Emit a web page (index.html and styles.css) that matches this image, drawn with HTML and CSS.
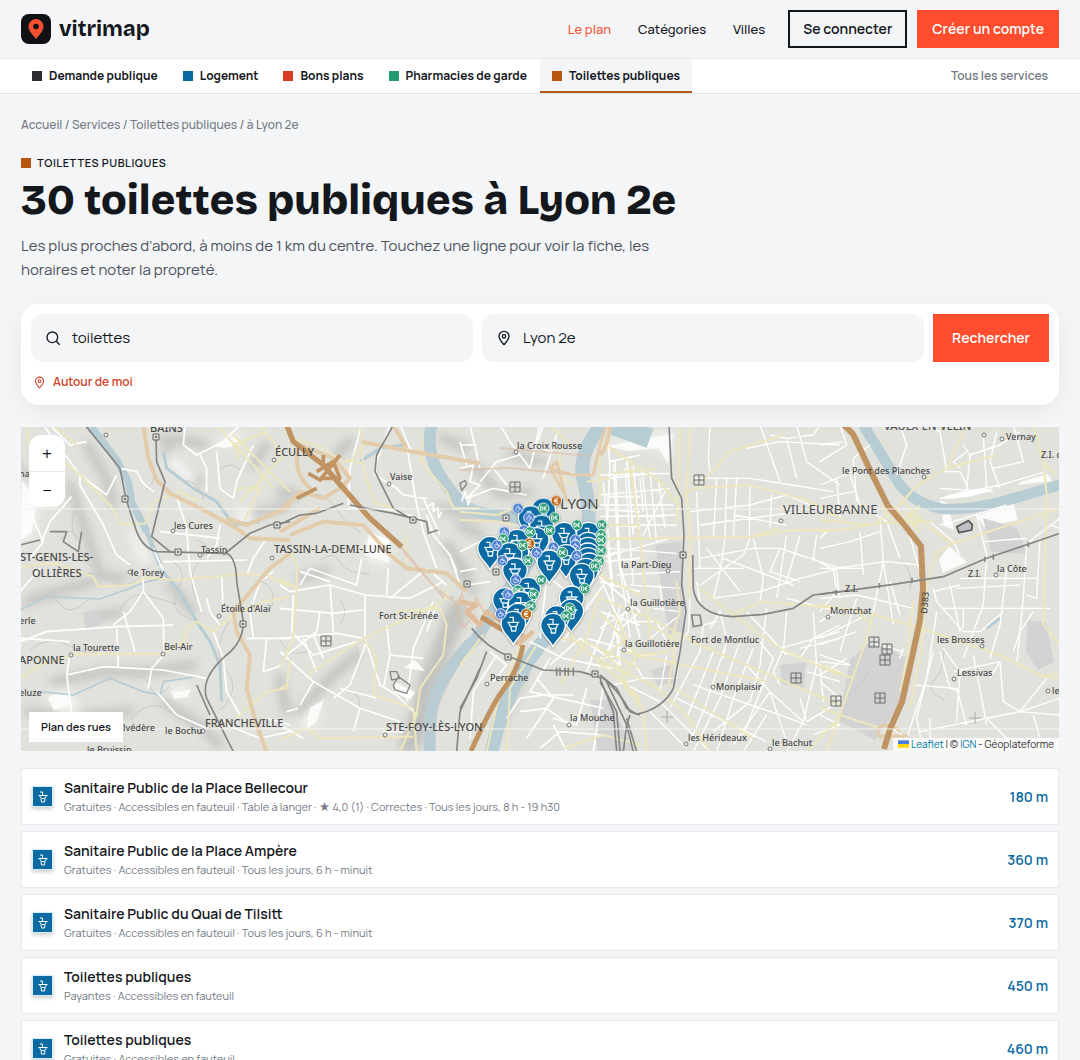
FILE: index.html
```html
<!DOCTYPE html>
<html lang="fr">
<head>
<meta charset="utf-8">
<meta name="viewport" content="width=device-width, initial-scale=1">
<title>30 toilettes publiques à Lyon 2e - vitrimap</title>
<link rel="stylesheet" href="styles.css">
</head>
<body>
<svg class="defs" aria-hidden="true">
  <defs>
    <symbol id="i-basin" viewBox="0 0 24 24"><path d="M6 2h5v7M3 9h18M6 9c0 4 2 6 4 6h4c3 0 4-2 4-6M8 15l1 7h6l1-7" fill="none" stroke="currentColor" stroke-width="2"/></symbol>
    <symbol id="i-pin" viewBox="0 0 24 24"><path d="M12 22c-4-4.500-7.500-8-7.500-12.500a7.500 7.500 0 0 1 15 0C19.500 14 16 17.500 12 22z" fill="none" stroke="currentColor" stroke-width="2" stroke-linejoin="round"/><circle cx="12" cy="9.500" r="2.500" fill="none" stroke="currentColor" stroke-width="2"/></symbol>
  </defs>
</svg>
<header class="topbar">
  <a class="brand" href="#">
    <svg class="brand-mark" viewBox="0 0 30 30" aria-hidden="true"><rect width="30" height="30" rx="8" fill="#0f1115"/><path d="M15 25c-4-5-7.500-8.500-7.500-12.500a7.500 7.500 0 0 1 15 0C22.500 16.500 19 20 15 25z" fill="#f4502f"/><circle cx="15" cy="12.500" r="2.800" fill="#0f1115"/></svg>
    <span>vitrimap</span>
  </a>
  <nav class="main-nav" aria-label="Navigation principale">
    <a class="current" href="#">Le plan</a>
    <a href="#">Catégories</a>
    <a href="#">Villes</a>
  </nav>
  <div class="account">
    <button class="btn btn-outline" type="button">Se connecter</button>
    <button class="btn btn-primary" type="button">Créer un compte</button>
  </div>
</header>
<nav class="services" aria-label="Services">
  <a href="#"><i class="sq ink"></i>Demande publique</a>
  <a href="#"><i class="sq blue"></i>Logement</a>
  <a href="#"><i class="sq red"></i>Bons plans</a>
  <a href="#"><i class="sq green"></i>Pharmacies de garde</a>
  <a class="active" href="#"><i class="sq brown"></i>Toilettes publiques</a>
  <a class="all" href="#">Tous les services</a>
</nav>
<main>
  <nav class="crumbs" aria-label="Fil d'Ariane"><a href="#">Accueil</a> / <a href="#">Services</a> / <a href="#">Toilettes publiques</a> / à Lyon 2e</nav>
  <p class="eyebrow"><i class="sq brown"></i>TOILETTES PUBLIQUES</p>
  <h1>30 toilettes publiques à Lyon 2e</h1>
  <p class="lead">Les plus proches d'abord, à moins de 1 km du centre. Touchez une ligne pour voir la fiche, les horaires et noter la propreté.</p>

  <form class="search">
    <div class="fields">
      <label class="field">
        <svg viewBox="0 0 24 24" aria-hidden="true"><circle cx="11" cy="11" r="8" fill="none" stroke="currentColor" stroke-width="2"/><path d="M17 17l5 5" stroke="currentColor" stroke-width="2"/></svg>
        <input type="text" value="toilettes" aria-label="Que cherchez-vous ?">
      </label>
      <label class="field">
        <svg viewBox="0 0 24 24" aria-hidden="true"><use href="#i-pin"/></svg>
        <input type="text" value="Lyon 2e" aria-label="Lieu">
      </label>
      <button class="btn btn-primary go" type="submit">Rechercher</button>
    </div>
    <button class="around" type="button"><svg viewBox="0 0 24 24" aria-hidden="true"><use href="#i-pin"/></svg>Autour de moi</button>
  </form>

  <section class="map" aria-label="Carte">
    <svg class="map-canvas" viewBox="21 427 1038 324" preserveAspectRatio="xMidYMid slice">
      <defs>
        <filter id="soft" x="-20%" y="-20%" width="140%" height="140%"><feGaussianBlur stdDeviation="5"/></filter>
        <g id="toilet"><path d="M0 62C-12 38-37 24-37-1a37 37 0 0 1 74 0C37 24 12 38 0 62z" fill="#0b6aa2" stroke="#fff" stroke-width="4"/><path d="M-12-20h12v15M-18-5h36M-13-5c0 9 4 13 10 13h6c7 0 10-4 10-13M-7 8l2 13h12l2-13" fill="none" stroke="#e9f4fb" stroke-width="4"/></g>
        <g id="access"><circle cx="-38" cy="-30" r="16" fill="#4f80cf" stroke="#e8f0fb" stroke-width="3"/><circle cx="-39" cy="-28" r="6" fill="none" stroke="#c9dbf7" stroke-width="3"/><path d="M-38-40v9h7l4 8" fill="none" stroke="#c9dbf7" stroke-width="3"/></g>
        <g id="free"><circle cx="39" cy="-30" r="16" fill="#35a078" stroke="#e6f6ef" stroke-width="3"/><path d="M30-36v12h2q5 0 5-6t-5-6zM48-36q-7-1-7 6t7 6M38-30h8" fill="none" stroke="#fff" stroke-width="3"/></g>
        <g id="paid"><circle cx="39" cy="-30" r="16" fill="#c06a18" stroke="#fdf0e2" stroke-width="3"/><path d="M45-37a8 8 0 1 0 0 14M33-32h10M33-28h10" fill="none" stroke="#fff" stroke-width="3"/></g>
        <g id="park" fill="none" stroke="#6a6a6a" stroke-width="1"><path d="M-5-5h10v10h-10zM0-5v10M-5 0h10"/></g>
        <g id="station"><path d="M-3-3h6v6h-6z" fill="#d8d8d4" stroke="#666" stroke-width="1"/><circle r="1" fill="#555"/></g>
        <g id="spot"><circle r="2" fill="#eee" stroke="#777" stroke-width="1"/></g>
      </defs>
      <rect x="21" y="427" width="1038" height="324" fill="#e2e2dd"/>

      <!-- Relief -->
      <g fill="none" stroke="#b6b7b5" stroke-linecap="round" stroke-linejoin="round" filter="url(#soft)" opacity=".75">
        <g transform="translate(20 425) scale(.3333)" stroke-width="26">
          <path d="M150 180L200 330 240 450 310 460M200 60L260 160 280 240M430 40L470 120 540 170M460 40L560 60M20 530L110 500 220 470M100 770L250 740 400 740 520 720M430 830L540 900 600 960M700 270L800 240M0 130L60 220M450 480L520 560M20 860L120 870M200 870L330 860M700 120L740 60M300 560L220 580" />
        </g>
        <g transform="translate(280 425) scale(.3333)">
          <path d="M530 560L500 640 450 760 420 880 390 960" stroke-width="62"/>
          <path d="M490 40L560 70M480 250L590 270 M500 360L560 440M60 460L140 440M230 690L150 760 60 860M0 760L20 860M170 90L210 50M0 200L50 210" stroke-width="28"/>
        </g>
        <g transform="translate(460 425) scale(.3333)" stroke-width="26"><path d="M40 120L120 210 210 200M150 90L250 110M0 300L60 330M0 430L40 500M190 740L120 900"/></g>
      </g>
      <g fill="#f9f9f8" filter="url(#soft)" opacity=".9">
        <path d="M22 470l18 30-10 40-9 2zM205 445l40-14-8 12zM172 450l26 26-8 10-24-22zM236 512l10-6 10 18-16-2zM48 695l20-4 10 14-18 10zM170 688l22-2-8 12-12-2zM126 520l14 22 12 26-14-10z"/>
        <path d="M374 530l16 12-2 24-22-8zM308 712l14-10-6 22-16 6zM604 442l70-10-6 28-12-14-40-2z"/>
      </g>
      <g fill="#fbfbfa">
        <path d="M605 446l34-6 34-6-5 30-9-16-30 3zM369 534l20 5v24l-24-8zM404 668l11-8 10 11zM395 682l20 10-5 8-16-8zM977 516l36-13 5 17-34 7zM939 560l10-14 18 16-24 11zM940 500l8 4 6 26-10-4zM213 446l22-10 8 8-18 4zM1020 482l28-8 4 7-34 4zM310 708l14-8-8 22-10 8zM171 691q10 2 20-2l-4 8-12 2zM48 698q10-8 20-2l4 8-18 6zM22 480l14 22-4 30-11 8z"/>
      </g>
      <g fill="#d3d3d4">
        <path d="M872 641l35 17-5 44-27 38-36-19 11-62zM1028 620l18 2 8 40-16 8-12-18zM655 545l26-4 4 90-16 4zM983 518l34 10 10 26-36-2zM780 665l26-3-2 26-22-4zM650 670l22-6 2 18-16 4zM83 612l16-2 3 14-16 6zM590 700l20 0 24 51h-36z"/>
      </g>

      <!-- Rivers -->
      <g fill="none" stroke="#b8ccd4" stroke-linejoin="round">
        <g transform="translate(20 425) scale(.3333)" stroke-width="22">
          <path d="M210 0L290 105 325 170 335 230 380 320"/>
          <path d="M380 320L420 420" stroke-width="14"/>
          <path d="M420 430L480 500 530 590 570 650 600 720 605 830M430 80L440 130 520 190 590 230 640 300 720 290" stroke-width="9"/>
          <path d="M0 555L80 515 240 522 330 490 380 470 430 460M160 810L270 760 370 800 420 810 430 770 530 755M60 800L160 810" stroke-width="5"/>
        </g>
        <g transform="translate(280 425) scale(.3333)"><path d="M455 0C430 100 490 170 530 220 560 265 620 270 720 272" stroke-width="36"/><path d="M240 110L300 70 370 60" stroke-width="10"/></g>
        <g transform="translate(460 425) scale(.3333)">
          <path d="M425 0Q350 90 372 170 390 240 385 300 380 400 370 470 330 560 240 660 130 800 95 980" stroke-width="42"/>
          <path d="M150 280Q240 270 230 350 210 430 160 470 90 570 50 640 -20 700-70 800-95 860-90 990" stroke-width="36"/>
          <path d="M430 -10L570 40" stroke-width="60"/>
        </g>
        <g transform="translate(820 425) scale(.3333)"><path d="M130 0L240 180Q290 240 370 252 450 254 540 232L720 180" stroke-width="32"/><path d="M500 610l40-30" stroke-width="9"/></g>
      </g>
      <path d="M938 499q30-12 56-10-22 10-56 10z" fill="#fff"/>

      <!-- Contours -->
      <g fill="none" stroke="#c9c9c5" stroke-width="1">
        <path d="M170 560q20 10 8 30t14 30M196 600q-10-24 4-40t-4-20M120 610q10-20 30-14t26 8M70 580q20-14 40 0t40-14M320 560q14-10 20 2t30 12M300 500q20-14 34 6t26 26M340 600q10 12 0 24M130 720q20-24 40-8t40 10M230 620q-20 30-4 50t-6 40M30 650q20-16 40-4t30 4M420 730q20-60 46-90M414 726q20-60 48-100M408 722q20-60 48-102M426 738q16-50 40-84M870 670q-10 20-24 26M944 650q0 20-10 30t10 20M900 560q14 10 10 30M30 600q20-10 30 4t30-6M60 540q14-20 20 6t20 20M80 500q-14 20-4 40M150 460q10 20-4 30M180 480q20 0 24 20M220 470q10-10 20 0M260 580q20 10 10 30M280 640q10 20 30 10M350 640q14 10 6 30M340 690q20-4 20 20M130 680q14-10 20 6t20 0"/>
      </g>

      <!-- Streets -->
      <g fill="none" stroke="#fff" stroke-width="5" stroke-linejoin="round">
        <g transform="translate(20 425) scale(.3333)">
          <path d="M70 0L180 150 260 210 290 150M180 150L180 180 250 300 290 390 330 420M90 0L150 60 200 50M300 130L350 140 370 175 400 200M30 260L70 350 30 400M155 215L90 290 65 350M0 500L60 430M370 455L370 500 330 560 280 600M0 650L80 620 290 605 460 600M290 610L295 725M310 560L345 680M370 500L430 580 432 690 395 730 385 790M150 690L140 750 155 860M140 750L250 725 430 735 560 760M0 640L150 650M420 320L560 335 600 340M470 215L500 310 510 440 545 560M400 370L430 440M430 410L680 405M495 0L490 60 530 90 610 50 660 0M540 90L560 130 560 200M590 80L600 190 640 220M700 60L650 170 640 220M610 560L605 455M680 450L700 400 740 340M560 520L570 560 600 600M580 620L610 700 620 800 660 870M680 640L810 640M740 640L730 740 790 720M560 400L590 360 600 300M410 800L470 870 560 910M740 880L810 900M620 900L720 940 810 920M700 640L690 560 720 470 760 440"/>
        </g>
        <g transform="translate(280 425) scale(.3333)">
          <path d="M245 0L210 130 205 240M205 250L340 255 430 285M330 0L290 110 285 150 350 190 370 210 440 220M380 60L410 240 430 320 470 430M360 0L390 70 420 90 M440 270L460 330 510 390 530 440M440 245l20-10 0 25 14-12 2 30 10-18M0 480L30 500 150 480 255 510 390 520 490 470M60 480L90 430 230 480 245 400M60 440L150 470M325 430L320 510M255 510L255 640 300 780 350 810 410 870M40 510L35 620 100 690 230 650M150 480L160 620M0 550L160 565 250 555M0 640L170 625 250 640M100 630L130 700M70 640L110 740M320 600L330 690 430 700M460 530L400 670 380 830M0 680L100 770 240 850 360 890M20 860L55 850M100 770L60 840M180 790L290 820M240 850L220 920M260 650L210 780 160 820M310 920L370 920M540 50L560 120M570 0L600 130M590 60L540 60M545 230l10-30 10 40 12-40M430 220L480 330M510 390L540 480M470 540L440 620M120 560L110 620 20 690M330 690L310 790M0 900L70 940M330 520L440 430 500 480"/>
        </g>
        <g transform="translate(460 425) scale(.3333)">
          <path d="M0 130L40 120 30 170 60 180 20 220 100 190 200 210M120 0L150 50 210 130 240 0M180 90L110 110 60 170M250 0L230 60 270 80M290 30L250 160M100 130L140 180M0 380L60 350 110 350M0 440L50 430M20 480L90 470M440 0L450 120 440 330 460 540M540 90L450 110M540 150L445 160M540 215L440 215M540 260L440 255M540 305L440 300M540 400L430 410M465 110L480 420 540 640M500 100L520 330M420 470L540 500M400 440L540 560M350 590L430 480 500 640M310 650L370 550M380 740L450 560M420 730L490 570M270 720L360 640 480 720M240 440L310 490 290 560M210 650L310 700 460 730M230 760L280 820 200 940M270 700L210 800 430 850M180 860L260 850 330 900M380 790L350 900 280 880M430 780L400 980M140 880L180 820 250 810 340 810M90 680L140 720 100 770M110 690L40 800 30 940M280 900L320 980M240 970L300 920 430 930M540 560L470 620 480 720M420 400L470 380M260 460L240 640M420 560L540 600M380 640L520 680"/>
        </g>
        <g transform="translate(600 425) scale(.3333)" stroke-width="4">
          <path d="M10 170L40 500M40 120L55 400 80 560M75 130L100 480M100 120L120 340M125 130L150 340M150 140L170 350M175 160L195 310M0 210L210 190M0 240L220 240M0 275L230 270M20 300L230 300M30 370L230 385M50 450L240 440M0 400L210 340M90 480L240 490M180 480L190 560M120 160L130 260M200 190L130 330M0 150L210 145M330 0L325 100 330 140M380 160L375 340 360 440 340 520M410 160L400 340M350 160L340 340M290 200L300 430M450 180L448 330M515 210L510 310M480 0L540 170M510 30L560 40 590 160M280 160L450 160 700 200M270 260L450 240 560 210 700 270M440 70L540 50 720 60M560 40L640 30 660 0M590 0L620 110 720 180M300 300L600 260M400 270L560 300M280 430L430 430 M300 400L460 370 540 370 720 430M300 480L430 390 450 340M340 520L480 500 600 460 720 430M320 370L420 500M370 400L580 480M460 340L490 460 480 530M540 370L510 440 600 470M560 330L530 520M600 330L560 470M650 330L640 400 710 440 720 520M290 470L300 530M330 610L360 560 380 640 370 700M310 600L350 590M20 580L60 640 50 700M0 610L80 560 90 640M60 540L30 680M80 590L170 590 200 650M150 640L240 570M160 550L240 560M170 690L110 690 90 720 M200 690L180 800M270 520L265 620 240 660 230 760M310 600L300 680 210 850M340 680L260 880M380 650L310 860 270 950M420 650L360 820 280 980M460 670L410 790 350 980M500 550L480 720 450 830 340 920M480 650L520 700 430 930M550 670L520 740 540 780M280 780L540 870 620 900M230 820L500 950M150 860L260 970M60 770L180 830M180 830L330 980M510 800L400 960M510 800L440 720M510 800L610 890 560 980M510 800L560 950M600 820L620 890M620 890L720 830M640 560L650 720 610 890M560 520L720 560M540 670L720 620M600 670L720 640M600 700L640 640 720 600M620 740L720 770M660 720L670 830M440 560L560 690M560 560L550 680 720 740M0 700L60 690M40 780L130 760M100 710L130 760 220 760M500 870L430 980M640 930L720 900"/>
        </g>
        <g transform="translate(820 425) scale(.3333)" stroke-width="4">
          <path d="M60 0L80 60 0 110M100 140L0 180M150 60L100 100 110 230M0 60L70 50M0 220L100 200M50 160L60 280M90 150L120 240 200 290M180 280L190 410 220 600M200 290L240 400M260 300L300 440M240 0L260 60 230 150M320 0L360 20 380 140M370 140L420 140 440 180M430 60L450 90 440 200M420 130L400 110 440 80M490 30L500 190M530 20L510 110 540 190M450 90L540 60 600 20M440 200L540 180 680 140M580 0L610 110 520 130M360 190L520 200M560 240L400 290 360 300M330 290L400 350 420 390M470 270L500 390 490 540 430 700M490 350L620 340M620 360L640 340 720 280M560 430L540 600 510 700M620 360L610 520 590 720M660 340L650 520 620 510M580 460L650 460M420 460L610 460M410 490L600 480M340 500L420 480M340 490L350 530 430 620 480 620 550 560M370 550L690 550M390 480L420 620M430 550L430 610M130 430L0 430 M40 430L50 500 0 560M40 430L200 410 300 420M190 410L160 560M120 320L130 450M0 370L90 350 180 320M20 320L0 340M210 470L240 570M0 520L110 510 280 550M50 560L0 590M0 640L140 570M0 660L110 620 M140 650L250 680M250 670L240 700M0 690L90 720 0 710M0 750L80 700M110 520L60 680M360 680L390 790 420 800M370 670L420 740 410 890M340 680L290 880 310 980M350 560L320 760 250 970M280 780L410 790 440 900M460 690L500 900M400 740L540 710M540 710L550 830 600 860M540 710L510 760M600 860L680 760M600 860L720 820M600 860L720 870M300 920L400 900 600 860M640 870L660 940 720 980M330 980L330 880M500 880L560 940 540 980M690 300L720 310M580 680L600 620 640 560M0 770L60 820M0 870L60 900M200 900L260 940"/>
        </g>
      </g>
      <g fill="none" stroke="#ece7bd" stroke-width="6" stroke-linejoin="round">
        <g transform="translate(20 425) scale(.3333)"><path d="M20 0L30 60M120 100L180 150 270 240 300 296 375 296 400 230 480 200 540 230M0 425L100 415 220 455 235 485 330 480 380 457 460 465 680 447 740 450 810 485M160 687L430 687 490 650 500 610 530 590 580 620 640 570 730 530 810 515M590 0L700 120 760 190M640 30L810 200M720 0L790 90 700 190 660 230M740 20L640 60 660 100M650 190L720 190 670 290M0 760L60 720 160 690M650 880L740 800 800 790 810 700M100 0L170 60"/></g>
        <g transform="translate(280 425) scale(.3333)"><path d="M30 40L110 60 190 110 215 105 245 60 250 130 285 235 350 250M200 105L250 115M240 0L250 60M0 460L50 490 50 420 30 380M50 490L40 640 0 730M80 750L250 640 470 540 500 520 505 490M350 560L480 550 500 600 490 690 420 790 410 870 360 980M250 640L290 700 280 810 400 850 410 980M0 945L80 910 120 940 400 935M410 70L440 130 500 200 520 250 600 250M380 330L380 420M430 40L420 110M0 790L20 780"/></g>
        <g transform="translate(460 425) scale(.3333)"><path d="M0 260L110 270 190 240 250 230M0 285L120 290 170 300M300 80L300 150 340 180M420 100L420 220 400 260M440 60L540 130M380 170L450 160M395 390L420 450 540 510M420 300L540 300M450 340L540 340M270 0L330 60M190 640L120 800 80 980M230 660L150 790 140 980M0 720L70 630M300 640L400 660 540 730M460 560L500 640 430 700 420 740M300 560L340 640 540 820M310 970L430 930 540 960M420 500L380 640 300 780M480 720L500 800 540 830"/></g>
        <g transform="translate(600 425) scale(.3333)"><path d="M240 0L235 170M30 70L180 170 240 250M40 145L170 130 M90 120L120 340 150 640M270 0L260 200 270 340 265 520M235 170L230 290M0 343L460 335 580 315 720 315M250 210L280 190 450 180 620 225 720 280M310 170L390 80 550 30M450 335L540 310M0 520L150 580 300 660 720 840M100 690L500 770M0 560L110 690 70 760 130 860 140 980M0 670L70 740M0 710L160 780 260 870 330 980M300 490L400 570 540 670 720 750M400 570L480 530 720 550M110 690L200 680 240 560 230 470M230 640L205 780M210 780L460 940M60 680L170 690M150 600L240 650M620 980L720 880"/></g>
        <g transform="translate(820 425) scale(.3333)"><path d="M640 0L670 110 710 150M670 110L680 210 670 600 720 660M430 20L380 130 290 180 240 240 160 300 0 285M0 320L100 310 180 295 340 290M380 130L530 90M200 230L300 320 260 260 330 310 400 355 720 250M240 220L310 290M300 240L240 300M350 380L400 355M350 380L320 480 300 700 270 850M0 540L130 560 300 610 420 650 540 690 670 755 720 760M670 755L720 740M160 560L140 640 20 980M110 560L160 600M0 720L100 760M0 850L180 910M280 530L260 700 240 800M180 240L220 290"/></g>
      </g>

      <!-- Main roads -->
      <g fill="none" stroke="#e2ccab" stroke-width="12" stroke-linejoin="round">
        <g transform="translate(20 425) scale(.3333)"><path d="M370 0L385 100 410 165 450 205 560 260 650 310 690 340 810 345M810 385L750 430 640 560 650 620 690 690 680 790 710 900 740 980M620 280L680 300 810 245"/></g>
        <g transform="translate(280 425) scale(.3333)"><path d="M245 50L400 80 600 115M30 330L130 290 250 300 330 390 380 430 500 445 560 500M0 260L60 200 130 220 180 190 210 160 160 100 60 60M60 60Q30 140 100 200M0 320L120 250M340 0L380 70"/></g>
        <g transform="translate(460 425) scale(.3333)"><path d="M440 0L420 60 400 150 340 150 270 130 290 110 320 230M270 130L310 200" stroke-width="9"/><path d="M0 530L50 540 20 560 60 600 80 560 140 600 200 640M170 660L220 620" stroke="#e0bf9c" stroke-width="14"/></g>
        <path d="M600 455q8-8 10-30" stroke-width="4"/>
        <path d="M882 738q-10-8 0-12t18 6M878 736l30 0" stroke-width="3"/>
      </g>
      <g fill="none" stroke="#ddb9a4" stroke-width="2" opacity=".6"><path d="M400 546l36 42 24 18M452 596l4 12 6-14 6 22 8-18 8 14M404 552l40 46M500 448l90 8M460 470l50-2 60 6M456 610l8 18 10-14 8 20"/></g>
      <g fill="none" stroke="#bf9462" stroke-linejoin="round">
        <g transform="translate(280 425) scale(.3333)"><path d="M20 0L40 50 130 120 190 190 270 280 365 365" stroke-width="16"/><path d="M50 220L110 190M85 145L120 165 180 90M120 160L180 160 160 110 110 140M130 90L130 120" stroke-width="11"/></g>
        <path d="M481 617l22 13M523 645c-2 12-8 30-22 48-10 14-18 32-30 58" stroke-width="5"/>
        <path d="M843 424l10 10 18 38 17 34 14 16 19 24 2 42-3 32-9 42-9 40-12 27-6 20" stroke-width="6"/>
      </g>

      <!-- Railways -->
      <g fill="none" stroke="#858585" stroke-width="5" stroke-linejoin="round">
        <g transform="translate(20 425) scale(.3333)"><path d="M195 0L300 130 318 222 350 320Q370 370 410 380L620 385Q650 400 650 470L670 590Q670 650 620 690 540 760 560 820L640 980M408 40L410 110 435 170 395 335 450 380M610 390L690 325 750 300 810 290M530 780L570 870M90 320L140 320 130 350 175 380 185 320M0 360L60 345" /></g>
        <g transform="translate(280 425) scale(.3333)"><path d="M0 298L60 270 110 265 190 235M210 240L340 265 440 290 445 325 475 315M340 0L290 90 285 140 340 250 400 285M600 730L540 860 530 980"/><path d="M340 780l15-25 35 25-10 25-35-10zM330 740l20 0 10 20-25 5zM540 175l15-8 5 10-15 20z" stroke-width="4"/></g>
        <g transform="translate(460 425) scale(.3333)"><path d="M35 610Q80 670 160 700L250 735 360 740 430 760Q480 800 510 860L540 870M420 760L460 860 470 980M440 770L500 900 490 980M500 880L530 980M80 680L50 760 0 850M290 728v24M300 728v24M315 728v24M325 728v24M340 728v24"/></g>
        <g transform="translate(600 425) scale(.3333)"><path d="M207 0L215 160 245 220 252 330 245 480 258 560 240 680 220 790Q190 850 110 868M278 390L280 490Q290 570 400 575L490 568 580 550 640 510 720 500M0 750L50 790 80 850 110 868M0 770L50 860 60 980M90 870L80 900 100 980M275 570l25 0 5 30-25 5z"/></g>
        <g transform="translate(820 425) scale(.3333)"><path d="M0 508L220 478 370 455 500 400 720 325M48 494v16M178 474v16M276 458v16M495 395v16M520 388v16M625 350v16"/><path d="M410 305l35-18 12 12-2 16-38 8z" fill="#bfc1c2" stroke="#555"/></g>
      </g>
      <path d="M21 509h1038M21 729h1038" stroke="#f4f4f2" stroke-width="1"/>

      <g>
        <use href="#park" x="515" y="487"/><use href="#park" x="699" y="480"/><use href="#park" x="326" y="641"/><use href="#park" x="796" y="678"/><use href="#park" x="836" y="701"/><use href="#park" x="880" y="698"/><use href="#park" x="874" y="642"/><use href="#park" x="887" y="649"/><use href="#park" x="885" y="660"/>
        <use href="#station" x="156" y="437"/><use href="#station" x="125" y="499"/><use href="#station" x="178" y="552"/><use href="#station" x="277" y="525"/><use href="#station" x="243" y="624"/><use href="#station" x="413" y="520"/><use href="#station" x="467" y="584"/><use href="#station" x="506" y="518"/><use href="#station" x="496" y="572"/><use href="#station" x="683" y="555"/><use href="#station" x="508" y="657"/><use href="#station" x="595" y="674"/>
        <use href="#spot" x="106" y="435"/><use href="#spot" x="274" y="460"/><use href="#spot" x="173" y="531"/><use href="#spot" x="200" y="555"/><use href="#spot" x="272" y="558"/><use href="#spot" x="130" y="572"/><use href="#spot" x="219" y="616"/><use href="#spot" x="71" y="655"/><use href="#spot" x="163" y="654"/><use href="#spot" x="203" y="731"/><use href="#spot" x="389" y="484"/><use href="#spot" x="385" y="735"/><use href="#spot" x="516" y="452"/><use href="#spot" x="781" y="521"/><use href="#spot" x="668" y="571"/><use href="#spot" x="628" y="609"/><use href="#spot" x="624" y="650"/><use href="#spot" x="828" y="617"/><use href="#spot" x="713" y="687"/><use href="#spot" x="686" y="744"/><use href="#spot" x="770" y="749"/><use href="#spot" x="487" y="684"/><use href="#spot" x="569" y="725"/><use href="#spot" x="984" y="435"/><use href="#spot" x="1002" y="439"/><use href="#spot" x="924" y="477"/><use href="#spot" x="996" y="575"/><use href="#spot" x="982" y="646"/><use href="#spot" x="954" y="679"/><use href="#spot" x="1048" y="691"/>
        <path d="M661 717h12M667 711v12M969 718h12M975 712v12" stroke="#aaa" stroke-width="1"/>
      </g>

      <!-- Place names -->
      <g class="town">
        <text x="150" y="432">BAINS</text><text x="275" y="456">ÉCULLY</text><text x="274" y="553">TASSIN-LA-DEMI-LUNE</text>
        <text x="20" y="561">ST-GENIS-LES-</text><text x="32" y="577">OLLIÈRES</text><text x="19" y="664">APONNE</text><text x="205" y="727">FRANCHEVILLE</text><text x="386" y="731">STE-FOY-LÈS-LYON</text><text x="884" y="430">VAULX-EN-VELIN</text>
      </g>
      <g class="city"><text x="783" y="514">VILLEURBANNE</text></g>
      <text class="metro" x="560" y="509">LYON</text>
      <g class="place">
        <text x="174" y="529">les Cures</text><text x="201" y="553">Tassin</text><text x="131" y="576">le Torey</text><text x="221" y="612">Étoile d'Alaï</text><text x="73" y="651">la Tourette</text><text x="164" y="650">Bel-Air</text><text x="390" y="480">Vaise</text><text x="379" y="619">Fort St-Irénée</text><text x="517" y="449">la Croix Rousse</text><text x="621" y="568">la Part-Dieu</text><text x="630" y="606">la Guillotière</text><text x="625" y="647">la Guillotière</text><text x="691" y="643">Fort de Montluc</text><text x="716" y="690">Monplaisir</text><text x="688" y="741">les Hérideaux</text><text x="772" y="746">le Bachut</text><text x="490" y="681">Perrache</text><text x="570" y="721">la Mouche</text><text x="1006" y="440">Vernay</text><text x="842" y="474">le Pont des Planches</text><text x="1041" y="458">Z.I. c</text><text x="997" y="572">la Côte</text><text x="968" y="577">Z.I.</text><text x="845" y="592">Z.I.</text><text x="830" y="614">Montchat</text><text x="937" y="643">les Brosses</text><text x="957" y="676">Lessivas</text><text x="1052" y="694">le</text><text x="19" y="477">na</text><text x="19" y="624">erle</text><text x="19" y="696">eluze</text><text x="123" y="731">lvédère</text><text x="165" y="734">le Bochu</text><text x="87" y="753">le Bruissin</text><text transform="translate(927 614) rotate(-85)">D383</text>
      </g>

      <!-- Results -->
      <g class="pins" transform="translate(460 425) scale(.3333)">
        <g transform="translate(250 257)"><use href="#toilet"/><use href="#paid"/></g>
        <g transform="translate(212 280)"><use href="#toilet"/><use href="#access"/><use href="#free"/></g>
        <g transform="translate(245 308)"><use href="#toilet"/><use href="#access"/><use href="#free"/></g>
        <g transform="translate(386 330)"><use href="#toilet"/><use href="#free"/></g>
        <g transform="translate(312 330)"><use href="#toilet"/><use href="#free"/></g>
        <g transform="translate(230 346)"><use href="#toilet"/><use href="#access"/><use href="#free"/></g>
        <g transform="translate(171 351)"><use href="#toilet"/><use href="#access"/><use href="#free"/></g>
        <g transform="translate(384 360)"><use href="#toilet"/><use href="#free"/></g>
        <g transform="translate(90 372)"><use href="#toilet"/><use href="#free"/></g>
        <g transform="translate(384 375)"><use href="#toilet"/><use href="#access"/><use href="#free"/></g>
        <g transform="translate(169 385)"><use href="#toilet"/><use href="#paid"/></g>
        <g transform="translate(149 391)"><use href="#toilet"/><use href="#access"/><use href="#free"/></g>
        <g transform="translate(384 392)"><use href="#toilet"/><use href="#access"/></g>
        <g transform="translate(318 397)"><use href="#toilet"/><use href="#access"/></g>
        <g transform="translate(384 406)"><use href="#toilet"/><use href="#free"/></g>
        <g transform="translate(268 413)"><use href="#toilet"/><use href="#access"/><use href="#free"/></g>
        <g transform="translate(388 422)"><use href="#toilet"/><use href="#access"/></g>
        <g transform="translate(165 437)"><use href="#toilet"/><use href="#access"/><use href="#free"/></g>
        <g transform="translate(378 438)"><use href="#toilet"/><use href="#free"/></g>
        <g transform="translate(365 453)"><use href="#toilet"/><use href="#free"/></g>
        <g transform="translate(205 495)"><use href="#toilet"/><use href="#access"/><use href="#free"/></g>
        <g transform="translate(335 521)"><use href="#toilet"/><use href="#free"/></g>
        <g transform="translate(135 526)"><use href="#toilet"/><use href="#free"/></g>
        <g transform="translate(182 538)"><use href="#toilet"/><use href="#access"/><use href="#free"/></g>
        <g transform="translate(334 560)"><use href="#toilet"/></g>
        <g transform="translate(174 573)"><use href="#toilet"/><use href="#free"/></g>
        <g transform="translate(290 580)"><use href="#toilet"/><use href="#free"/></g>
        <g transform="translate(160 597)"><use href="#toilet"/><use href="#access"/><use href="#paid"/></g>
        <g transform="translate(279 603)"><use href="#toilet"/><use href="#free"/></g>
      </g>
    </svg>
    <div class="zoom">
      <button type="button" aria-label="Zoom avant">+</button>
      <button type="button" aria-label="Zoom arrière">−</button>
    </div>
    <button class="layer" type="button">Plan des rues</button>
    <p class="credit"><svg viewBox="0 0 12 8" aria-hidden="true"><path fill="#4c7be1" d="M0 0h12v4H0z"/><path fill="#ffd500" d="M0 4h12v4H0z"/></svg> <a href="#">Leaflet</a> | © <a href="#">IGN</a> - Géoplateforme</p>
  </section>

  <ul class="results">
    <li><a href="#"><span class="tile"><svg aria-hidden="true"><use href="#i-basin"/></svg></span><span class="text"><strong>Sanitaire Public de la Place Bellecour</strong><small>Gratuites · Accessibles en fauteuil · Table à langer · ★ 4,0 (1) · Correctes · Tous les jours, 8 h - 19 h30</small></span><span class="dist">180 m</span></a></li>
    <li><a href="#"><span class="tile"><svg aria-hidden="true"><use href="#i-basin"/></svg></span><span class="text"><strong>Sanitaire Public de la Place Ampère</strong><small>Gratuites · Accessibles en fauteuil · Tous les jours, 6 h - minuit</small></span><span class="dist">360 m</span></a></li>
    <li><a href="#"><span class="tile"><svg aria-hidden="true"><use href="#i-basin"/></svg></span><span class="text"><strong>Sanitaire Public du Quai de Tilsitt</strong><small>Gratuites · Accessibles en fauteuil · Tous les jours, 6 h - minuit</small></span><span class="dist">370 m</span></a></li>
    <li><a href="#"><span class="tile"><svg aria-hidden="true"><use href="#i-basin"/></svg></span><span class="text"><strong>Toilettes publiques</strong><small>Payantes · Accessibles en fauteuil</small></span><span class="dist">450 m</span></a></li>
    <li><a href="#"><span class="tile"><svg aria-hidden="true"><use href="#i-basin"/></svg></span><span class="text"><strong>Toilettes publiques</strong><small>Gratuites · Accessibles en fauteuil</small></span><span class="dist">460 m</span></a></li>
  </ul>
</main>
</body>
</html>
```
FILE: styles.css
```css
* { box-sizing: border-box; }

body {
  margin: 0;
  background: #f3f5f7;
  color: #14171c;
  font-family: Manrope, Inter, "Liberation Sans", sans-serif;
  font-size: 13px;
  line-height: 20px;
}

a { color: inherit; text-decoration: none; }
button, input { font: inherit; color: inherit; }
button { cursor: pointer; }
p, h1, ul { margin: 0; padding: 0; }
.defs { display: block; width: 0; height: 0; }

.topbar {
  display: flex;
  align-items: center;
  height: 58px;
  padding: 0 21px;
}
.brand {
  display: flex;
  align-items: center;
  gap: 8px;
  margin-right: auto;
  font-family: "Bricolage Grotesque", Manrope, Inter, sans-serif;
  font-size: 22px;
  font-weight: 700;
}
.brand-mark { width: 30px; height: 30px; }
.main-nav { display: flex; gap: 27px; margin-right: 23px; font-weight: 500; }
.main-nav .current { color: #f4553a; }
.account { display: flex; gap: 10px; }

.btn {
  height: 38px;
  padding: 0 13px;
  border: 2px solid #14171c;
  background: none;
  font-size: 14px;
  font-weight: 600;
}
.btn-primary { background: #ff4d2e; border-color: #ff4d2e; color: #fff; }

.services {
  display: flex;
  gap: 1px;
  height: 36px;
  padding: 0 20px;
  background: #fff;
  border-top: 1px solid #e6e8eb;
  border-bottom: 1px solid #e1e3e6;
  font-size: 12px;
  font-weight: 700;
}
.services a {
  display: flex;
  align-items: center;
  gap: 7px;
  padding: 2px 12px 0;
  border-bottom: 2px solid transparent;
}
.services .active { background: #f3f5f7; border-color: #b8560f; }
.services .all { margin-left: auto; color: #737a84; font-weight: 600; }

.sq { width: 10px; height: 10px; }
.ink { background: #2b2d31; }
.blue { background: #0b6aa2; }
.red { background: #d63b25; }
.green { background: #229a6f; }
.brown { background: #b8560f; }

main { padding: 21px 21px 20px; }
.crumbs { color: #737a84; font-size: 12px; font-weight: 500; }
.eyebrow {
  display: flex;
  align-items: center;
  gap: 6px;
  margin-top: 19px;
  font-size: 11px;
  line-height: 18px;
  font-weight: 600;
  letter-spacing: .05em;
}
h1 {
  font-family: "Bricolage Grotesque", Manrope, Inter, sans-serif;
  font-size: 42px;
  line-height: 56px;
  font-weight: 800;
}
.lead {
  max-width: 680px;
  margin-top: 6px;
  color: #4c525c;
  font-size: 15px;
  line-height: 24px;
}

.search {
  margin-top: 22px;
  padding: 10px;
  border-radius: 18px;
  background: #fff;
  box-shadow: 0 6px 20px #0f11150f;
}
.fields { display: flex; gap: 9px; }
.field {
  display: flex;
  flex: 1;
  align-items: center;
  gap: 11px;
  height: 48px;
  padding: 0 14px;
  border-radius: 12px;
  background: #f3f5f7;
}
.field svg { width: 16px; height: 16px; }
.field input { flex: 1; min-width: 0; padding: 0; border: 0; outline: 0; background: none; font-size: 15px; }
.go { height: 48px; padding: 0 17px; }
.around {
  display: flex;
  align-items: center;
  gap: 7px;
  margin: 10px 0 3px;
  padding: 0 2px;
  border: 0;
  background: none;
  color: #cf4128;
  font-size: 12px;
  font-weight: 600;
}
.around svg { width: 13px; height: 13px; }

.map { position: relative; height: 324px; margin-top: 22px; overflow: hidden; }
.map-canvas { display: block; width: 100%; height: 100%; font-family: "Noto Sans", "Open Sans", sans-serif; fill: #4a4a4a; }
.town { font-size: 11px; font-weight: 500; }
.city { font-size: 13px; }
.metro { font-size: 15px; }
.place { font-size: 9px; font-weight: 500; }
.pins { filter: drop-shadow(0 2px 3px #0005); }

.zoom {
  position: absolute;
  top: 8px;
  left: 8px;
  width: 36px;
  border-radius: 12px;
  background: #fff;
  overflow: hidden;
}
.zoom button { display: block; width: 36px; height: 36px; padding: 0; border: 0; background: none; font-size: 18px; }
.zoom button + button { border-top: 1px solid #e6e8eb; }
.layer {
  position: absolute;
  left: 8px;
  bottom: 9px;
  height: 30px;
  padding: 0 12px;
  border: 0;
  background: #fff;
  font-size: 11px;
  font-weight: 600;
}
.credit {
  position: absolute;
  right: 0;
  bottom: 0;
  padding: 0 5px;
  background: #fffc;
  color: #333;
  font-size: 10px;
  line-height: 13px;
}
.credit svg { width: 11px; height: 8px; }
.credit a { color: #0078a8; }

.results { display: grid; gap: 6px; margin-top: 17px; list-style: none; }
.results a {
  display: flex;
  align-items: center;
  gap: 11px;
  padding: 9px 10px;
  border: 1px solid #e6e8eb;
  background: #fff;
}
.tile {
  display: grid;
  place-items: center;
  width: 21px;
  height: 21px;
  border: 1px solid #d5ecfa;
  background: #0b6aa2;
  color: #fff;
  box-shadow: 0 2px 4px #0003;
}
.tile svg { width: 12px; height: 12px; }
.text { display: grid; flex: 1; }
.text strong { font-size: 14px; line-height: 20px; font-weight: 600; }
.text small { color: #737a84; font-size: 11px; line-height: 17px; }
.dist { color: #0b6aa2; font-size: 14px; font-weight: 600; }
```
